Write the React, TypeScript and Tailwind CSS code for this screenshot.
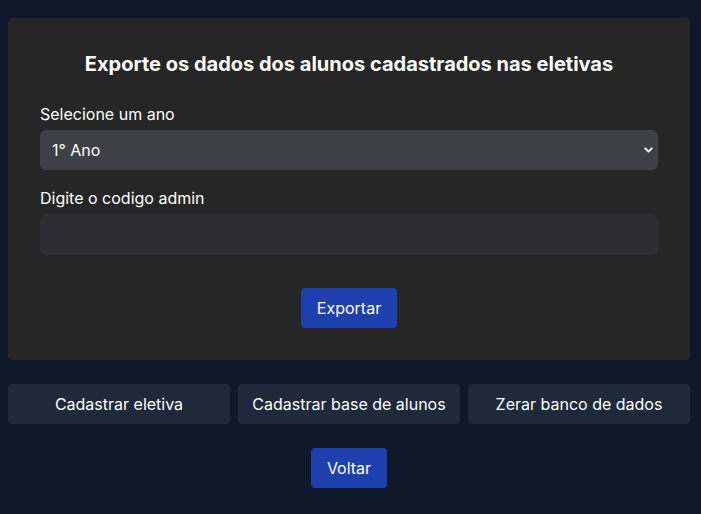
import { ChevronDown } from 'lucide-react'

export default function App() {
  return (
    <div
      className="min-h-screen bg-[#0f172a] pt-[18px] pr-[11px] pl-2 text-white"
      style={{ fontFamily: 'Inter, "Noto Sans", sans-serif' }}
    >
      <div className="rounded bg-[#262626] px-8 pt-8 pb-8">
        <h1 className="mb-6 text-center text-xl leading-7 font-bold">
          Exporte os dados dos alunos cadastrados nas eletivas
        </h1>

        <label className="block text-base leading-6">Selecione um ano</label>
        <div className="relative mt-1">
          <select className="h-10 w-full appearance-none rounded-md bg-[#3f3f46] px-3 text-base text-white outline-none">
            <option>1° Ano</option>
            <option>2° Ano</option>
            <option>3° Ano</option>
          </select>
          <ChevronDown
            className="pointer-events-none absolute top-1/2 right-[3px] size-[13px] -translate-y-1/2"
            strokeWidth={3.5}
          />
        </div>

        <label className="mt-4 block text-base leading-6">Digite o codigo admin</label>
        <input
          type="password"
          className="mt-1 h-[41px] w-full rounded-md bg-[#2e2d32] px-3 text-base text-white outline-none"
        />

        <div className="mt-[33px] flex justify-center">
          <button className="h-10 rounded bg-[#1e40af] px-4 text-base">Exportar</button>
        </div>
      </div>

      <div className="mt-6 grid grid-cols-3 gap-2">
        <button className="h-10 rounded bg-[#1e293b] text-base">Cadastrar eletiva</button>
        <button className="h-10 rounded bg-[#1e293b] text-base">Cadastrar base de alunos</button>
        <button className="h-10 rounded bg-[#1e293b] text-base">Zerar banco de dados</button>
      </div>

      <div className="mt-6 flex justify-center">
        <button className="h-10 rounded bg-[#1e40af] px-4 text-base">Voltar</button>
      </div>
    </div>
  )
}
